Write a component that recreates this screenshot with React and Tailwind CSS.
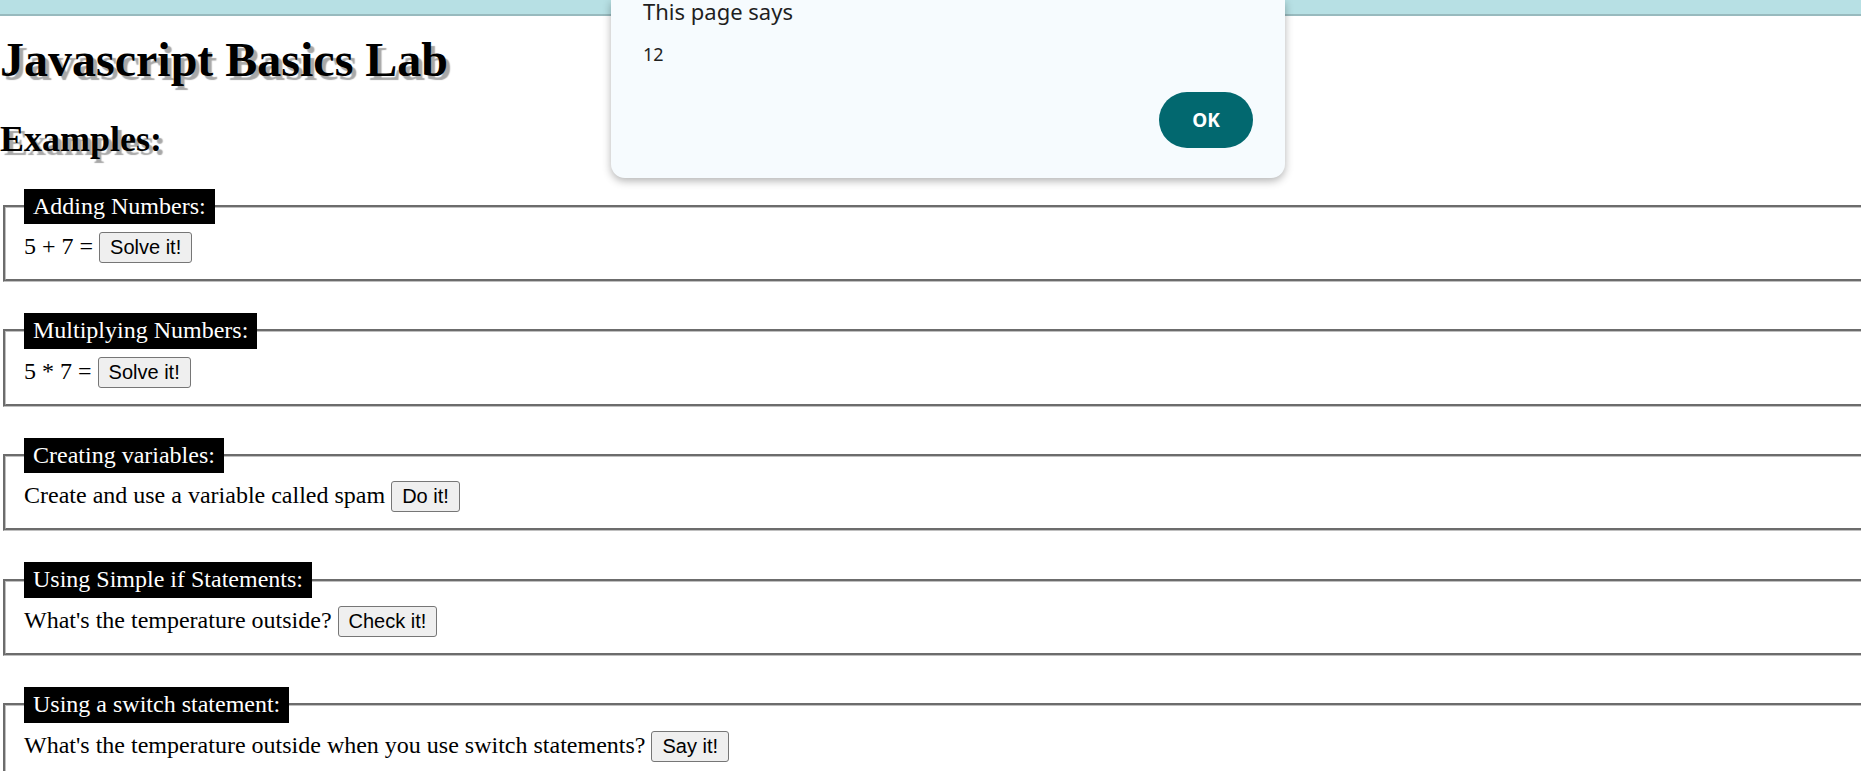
import React from 'react';

const examples = [
  { title: 'Adding Numbers:', text: '5 + 7 =', action: 'Solve it!' },
  { title: 'Multiplying Numbers:', text: '5 * 7 =', action: 'Solve it!' },
  { title: 'Creating variables:', text: 'Create and use a variable called spam', action: 'Do it!' },
  { title: 'Using Simple if Statements:', text: "What's the temperature outside?", action: 'Check it!' },
  {
    title: 'Using a switch statement:',
    text: "What's the temperature outside when you use switch statements?",
    action: 'Say it!',
  },
];

const Example = ({ title, text, action }) => (
  <fieldset className="mx-[3px] mb-[31px] w-[1900px] border-[3px] [border-style:groove] border-[#c0c0c0] px-[18px] pt-[8px] pb-[16px]">
    <legend className="bg-black px-[9px] py-[4px] text-white leading-[1.15]">{title}</legend>
    <div className="leading-[1.15]">
      {text}{' '}
      <button className="rounded-[3px] border border-[#767676] bg-[#efefef] px-[10px] py-[3px] font-['Liberation_Sans',Arial,sans-serif] text-[20px] leading-[23px] text-black">
        {action}
      </button>
    </div>
  </fieldset>
);

const App = () => {
  return (
    <div className="relative flow-root h-[771px] overflow-hidden bg-white font-['Liberation_Serif','Times_New_Roman',serif] text-[24px] text-black">
      {/* page */}
      <h1 className="mt-[32px] mb-[32px] text-[48px] font-bold leading-[1.15] [text-shadow:4px_4px_1px_#a8a8a8]">
        Javascript Basics Lab
      </h1>
      <h2 className="mb-[28px] text-[36px] font-bold leading-[1.15] [text-shadow:4px_4px_1px_#a8a8a8]">Examples:</h2>

      {examples.map((ex) => (
        <Example key={ex.title} {...ex} />
      ))}

      {/* browser strip */}
      <div className="absolute top-0 left-0 h-4 w-full border-b-2 border-[#98babe] bg-[#b7e0e4]" />

      {/* alert dialog */}
      <div className="absolute top-0 left-[611px] flex h-[178px] w-[674px] flex-col rounded-b-[14px] bg-[#f6fbfe] px-[32px] font-['Noto_Sans','Open_Sans',sans-serif] text-[#1f1f1f] shadow-[0_3px_8px_rgba(0,0,0,0.3)]">
        <div className="text-[22px] leading-[22px]">This page says</div>
        <div className="mt-[20px] text-[18px] leading-[24px]">12</div>
        <button className="mt-[26px] h-[56px] w-[94px] self-end rounded-full bg-[#02686f] text-[19px] font-bold text-white">
          OK
        </button>
      </div>
    </div>
  );
};

export default App;
